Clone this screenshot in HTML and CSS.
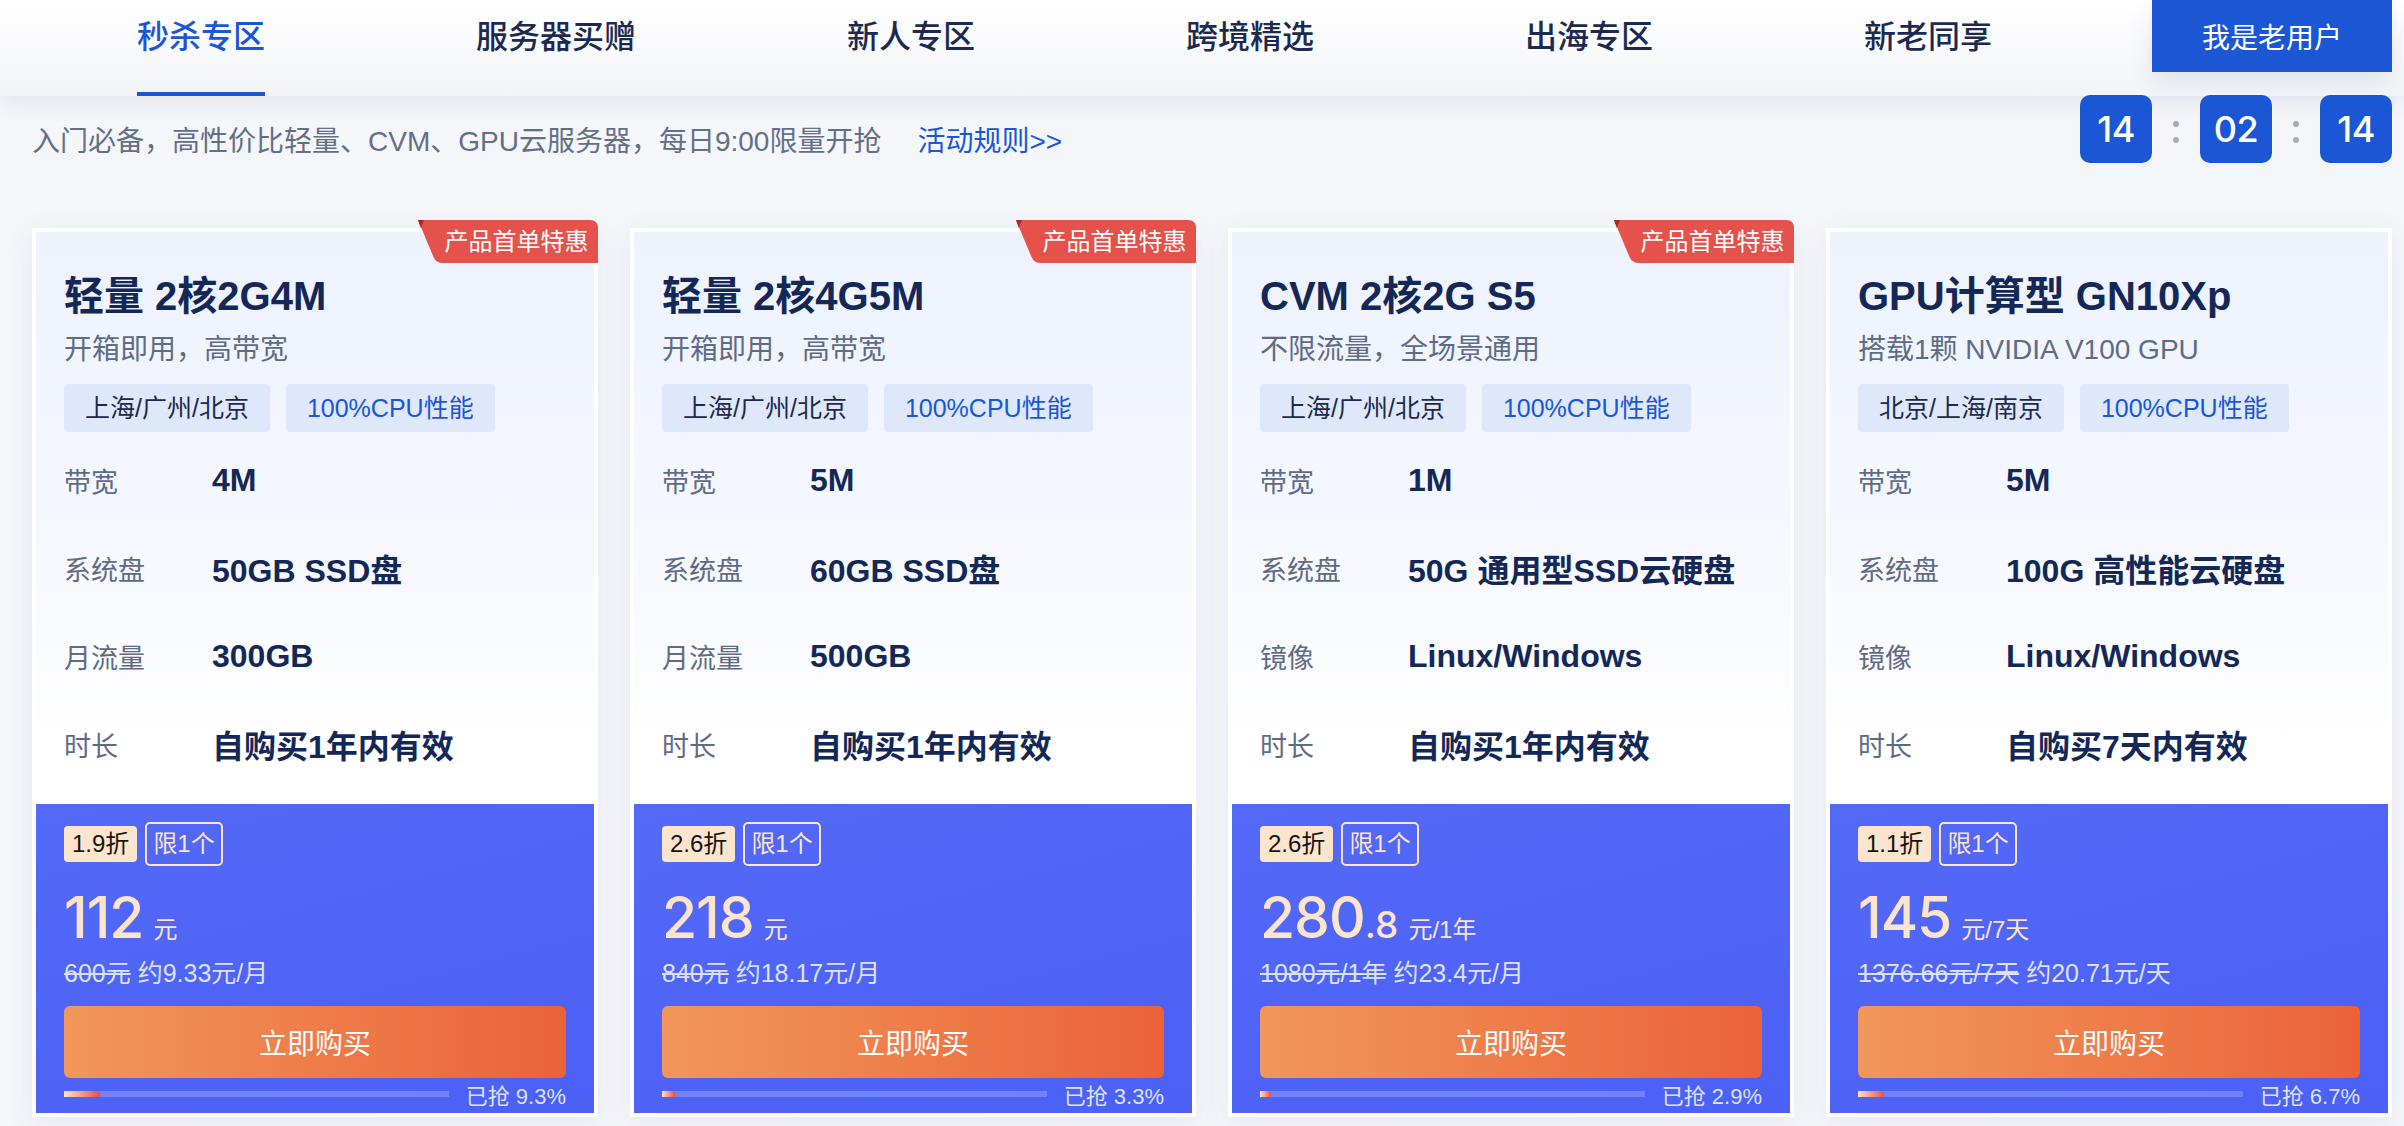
FILE: index.html
```html
<!DOCTYPE html>
<html lang="zh-CN">
<head>
<meta charset="utf-8">
<title>秒杀专区</title>
<link rel="stylesheet" href="styles.css">
</head>
<body>
<header class="nav">
  <div class="nav-inner">
    <nav class="tabs">
      <a class="tab active">秒杀专区</a>
      <a class="tab">服务器买赠</a>
      <a class="tab">新人专区</a>
      <a class="tab">跨境精选</a>
      <a class="tab">出海专区</a>
      <a class="tab">新老同享</a>
    </nav>
    <a class="old-user">我是老用户</a>
  </div>
</header>

<main class="main">
  <div class="topline">
    <p class="intro">入门必备，高性价比轻量、CVM、GPU云服务器，每日9:00限量开抢<a class="rules">活动规则&gt;&gt;</a></p>
    <div class="countdown">
      <span class="cd-box">14</span>
      <span class="cd-sep"><i></i><i></i></span>
      <span class="cd-box">02</span>
      <span class="cd-sep"><i></i><i></i></span>
      <span class="cd-box">14</span>
    </div>
  </div>

  <section class="cards">
    <article class="card">
      <div class="badge"><svg class="badge-bg" width="180" height="43" viewBox="0 0 180 43"><path d="M0 0H172Q180 0 180 8V43H25Q18 43 15.5 37Z" fill="#e4524b"/><path d="M0 0H6L2.8 8Z" fill="#a82a25"/></svg><span>产品首单特惠</span></div>
      <div class="card-top">
        <h3 class="title">轻量 2核2G4M</h3>
        <p class="desc">开箱即用，高带宽</p>
        <div class="tags"><span class="tag">上海/广州/北京</span><span class="tag tag-blue">100%CPU性能</span></div>
        <dl class="specs">
          <div class="row"><dt>带宽</dt><dd>4M</dd></div>
          <div class="row"><dt>系统盘</dt><dd>50GB SSD盘</dd></div>
          <div class="row"><dt>月流量</dt><dd>300GB</dd></div>
          <div class="row"><dt>时长</dt><dd>自购买1年内有效</dd></div>
        </dl>
      </div>
      <div class="card-bottom">
        <div class="deal"><span class="off">1.9折</span><span class="limit">限1个</span></div>
        <div class="price"><span class="num">112</span><span class="unit">元</span></div>
        <p class="orig"><s>600元</s> 约9.33元/月</p>
        <a class="buy">立即购买</a>
        <div class="progress"><div class="track"><div class="fill" style="width:9.3%"></div></div><span class="sold">已抢 9.3%</span></div>
      </div>
    </article>

    <article class="card">
      <div class="badge"><svg class="badge-bg" width="180" height="43" viewBox="0 0 180 43"><path d="M0 0H172Q180 0 180 8V43H25Q18 43 15.5 37Z" fill="#e4524b"/><path d="M0 0H6L2.8 8Z" fill="#a82a25"/></svg><span>产品首单特惠</span></div>
      <div class="card-top">
        <h3 class="title">轻量 2核4G5M</h3>
        <p class="desc">开箱即用，高带宽</p>
        <div class="tags"><span class="tag">上海/广州/北京</span><span class="tag tag-blue">100%CPU性能</span></div>
        <dl class="specs">
          <div class="row"><dt>带宽</dt><dd>5M</dd></div>
          <div class="row"><dt>系统盘</dt><dd>60GB SSD盘</dd></div>
          <div class="row"><dt>月流量</dt><dd>500GB</dd></div>
          <div class="row"><dt>时长</dt><dd>自购买1年内有效</dd></div>
        </dl>
      </div>
      <div class="card-bottom">
        <div class="deal"><span class="off">2.6折</span><span class="limit">限1个</span></div>
        <div class="price"><span class="num">218</span><span class="unit">元</span></div>
        <p class="orig"><s>840元</s> 约18.17元/月</p>
        <a class="buy">立即购买</a>
        <div class="progress"><div class="track"><div class="fill" style="width:3.3%"></div></div><span class="sold">已抢 3.3%</span></div>
      </div>
    </article>

    <article class="card">
      <div class="badge"><svg class="badge-bg" width="180" height="43" viewBox="0 0 180 43"><path d="M0 0H172Q180 0 180 8V43H25Q18 43 15.5 37Z" fill="#e4524b"/><path d="M0 0H6L2.8 8Z" fill="#a82a25"/></svg><span>产品首单特惠</span></div>
      <div class="card-top">
        <h3 class="title">CVM 2核2G S5</h3>
        <p class="desc">不限流量，全场景通用</p>
        <div class="tags"><span class="tag">上海/广州/北京</span><span class="tag tag-blue">100%CPU性能</span></div>
        <dl class="specs">
          <div class="row"><dt>带宽</dt><dd>1M</dd></div>
          <div class="row"><dt>系统盘</dt><dd>50G 通用型SSD云硬盘</dd></div>
          <div class="row"><dt>镜像</dt><dd>Linux/Windows</dd></div>
          <div class="row"><dt>时长</dt><dd>自购买1年内有效</dd></div>
        </dl>
      </div>
      <div class="card-bottom">
        <div class="deal"><span class="off">2.6折</span><span class="limit">限1个</span></div>
        <div class="price"><span class="num">280</span><span class="dec">.8</span><span class="unit">元/1年</span></div>
        <p class="orig"><s>1080元/1年</s> 约23.4元/月</p>
        <a class="buy">立即购买</a>
        <div class="progress"><div class="track"><div class="fill" style="width:2.9%"></div></div><span class="sold">已抢 2.9%</span></div>
      </div>
    </article>

    <article class="card">
      <div class="card-top">
        <h3 class="title">GPU计算型 GN10Xp</h3>
        <p class="desc">搭载1颗 NVIDIA V100 GPU</p>
        <div class="tags"><span class="tag">北京/上海/南京</span><span class="tag tag-blue">100%CPU性能</span></div>
        <dl class="specs">
          <div class="row"><dt>带宽</dt><dd>5M</dd></div>
          <div class="row"><dt>系统盘</dt><dd>100G 高性能云硬盘</dd></div>
          <div class="row"><dt>镜像</dt><dd>Linux/Windows</dd></div>
          <div class="row"><dt>时长</dt><dd>自购买7天内有效</dd></div>
        </dl>
      </div>
      <div class="card-bottom">
        <div class="deal"><span class="off">1.1折</span><span class="limit">限1个</span></div>
        <div class="price"><span class="num">145</span><span class="unit">元/7天</span></div>
        <p class="orig"><s>1376.66元/7天</s> 约20.71元/天</p>
        <a class="buy">立即购买</a>
        <div class="progress"><div class="track"><div class="fill" style="width:6.7%"></div></div><span class="sold">已抢 6.7%</span></div>
      </div>
    </article>
  </section>
</main>
</body>
</html>
```

FILE: styles.css
```css
* { box-sizing: border-box; }

html, body {
  margin: 0;
  padding: 0;
}

body {
  background: #f5f6fa;
  font-family: "Liberation Sans", "Noto Sans CJK SC", sans-serif;
  color: #172a55;
  width: 2404px;
  height: 1126px;
  overflow: hidden;
}

p, h3, dl, dd { margin: 0; }

/* ---------- nav ---------- */
.nav {
  position: relative;
  z-index: 2;
  height: 96px;
  background: linear-gradient(180deg, #ffffff 0%, #f3f4f8 100%);
  box-shadow: 0 6px 22px rgba(60, 80, 140, 0.10);
}

.nav-inner {
  width: 2360px;
  margin-left: 32px;
  height: 96px;
  display: flex;
  align-items: flex-start;
}

.tabs {
  display: flex;
  gap: 211px;
  padding-left: 105px;
}

.tab {
  display: block;
  height: 96px;
  padding-top: 15px;
  font-size: 32px;
  line-height: 44px;
  font-weight: 500;
  color: #1b2a4e;
  border-bottom: 4px solid transparent;
  cursor: pointer;
}

.tab.active {
  color: #1a56d6;
  border-bottom-color: #1a56d6;
}

.old-user {
  margin-left: auto;
  width: 240px;
  height: 72px;
  background: #1b57d4;
  color: #fff;
  font-size: 28px;
  display: flex;
  align-items: center;
  justify-content: center;
  box-shadow: 0 10px 22px rgba(70, 90, 140, 0.12);
}

/* ---------- main ---------- */
.main {
  width: 2360px;
  margin-left: 32px;
}

.topline {
  display: flex;
  justify-content: space-between;
  align-items: flex-start;
  height: 68px;
}

.intro {
  margin-top: 28px;
  font-size: 28px;
  line-height: 36px;
  color: #636e87;
}

.rules {
  margin-left: 36px;
  color: #1a56d6;
}

.countdown {
  position: relative;
  z-index: 3;
  margin-top: -1px;
  display: flex;
  align-items: center;
}

.cd-box {
  width: 72px;
  height: 68px;
  border-radius: 10px;
  background: #1b57d4;
  color: #fff;
  font-family: Inter, "Liberation Sans", sans-serif;
  font-size: 36px;
  font-weight: 500;
  display: flex;
  align-items: center;
  justify-content: center;
  letter-spacing: -0.5px;
}

.cd-sep {
  width: 48px;
  display: flex;
  flex-direction: column;
  align-items: center;
  gap: 10px;
  padding-top: 6px;
}

.cd-sep i {
  display: block;
  width: 6px;
  height: 6px;
  border-radius: 50%;
  background: #a1a9ba;
}

/* ---------- cards ---------- */
.cards {
  margin-top: 64px;
  display: grid;
  grid-template-columns: repeat(4, 566px);
  gap: 32px;
}

.card {
  position: relative;
  border: 4px solid #fff;
  background: #fff;
  box-shadow: 0 6px 28px rgba(60, 80, 140, 0.08);
}

.badge {
  position: absolute;
  top: -12px;
  right: -4px;
  width: 180px;
  height: 43px;
  padding-left: 25px;
  color: #fff;
  font-size: 24px;
  line-height: 43px;
  white-space: nowrap;
  display: flex;
  align-items: center;
  justify-content: center;
}

.badge-bg {
  position: absolute;
  left: 0;
  top: 0;
  display: block;
}

.badge span {
  position: relative;
  margin-right: 8px;
}

.card-top {
  padding: 40px 28px 16px;
  background: linear-gradient(180deg, #edf2fd 0%, #f6f8fe 55%, #ffffff 90%);
}

.title {
  font-size: 40px;
  line-height: 48px;
  font-weight: 700;
  color: #142857;
  white-space: nowrap;
}

.desc {
  margin-top: 12px;
  font-size: 28px;
  line-height: 36px;
  color: #5f6b85;
}

.tags {
  margin-top: 16px;
  display: flex;
  gap: 16px;
}

.tag {
  height: 48px;
  padding: 0 21px;
  border-radius: 4px;
  background: #dfe8fb;
  color: #1c2a4a;
  font-size: 25px;
  line-height: 48px;
}

.tag-blue {
  color: #1a56d6;
}

.specs {
  margin-top: 4px;
}

.row {
  height: 88px;
  display: grid;
  grid-template-columns: 148px 1fr;
  align-items: center;
}

.row dt {
  font-size: 27px;
  color: #5f6b85;
}

.row dd {
  font-size: 32px;
  font-weight: 700;
  color: #142857;
  white-space: nowrap;
}

/* ---------- bottom ---------- */
.card-bottom {
  height: 309px;
  padding: 18px 28px 7px;
  background: linear-gradient(165deg, #5369f7 0%, #4b60f5 100%);
  color: #fde4cc;
}

.deal {
  height: 44px;
  display: flex;
  align-items: center;
  gap: 8px;
}

.off {
  height: 36px;
  padding: 0 8px;
  border-radius: 4px;
  background: #fde4cc;
  color: #141414;
  font-size: 24px;
  line-height: 36px;
}

.limit {
  height: 44px;
  padding: 0 6px;
  border: 2px solid #fde4cc;
  border-radius: 5px;
  color: #fde4cc;
  font-size: 24px;
  line-height: 40px;
}

.price {
  margin-top: 23px;
  height: 58px;
  font-family: Inter, "Liberation Sans", "Noto Sans CJK SC", sans-serif;
  font-size: 57px;
  line-height: 58px;
  font-weight: 500;
  color: #fde4cc;
  white-space: nowrap;
  letter-spacing: -1px;
}

.price .dec {
  font-size: 37px;
  line-height: 1;
  letter-spacing: 0;
}

.price .unit {
  margin-left: 10px;
  font-family: "Liberation Sans", "Noto Sans CJK SC", sans-serif;
  font-size: 24px;
  line-height: 1;
  font-weight: 400;
  letter-spacing: 0;
}

.orig {
  margin-top: 9px;
  font-size: 25px;
  line-height: 34px;
  color: #dce1ff;
  white-space: nowrap;
}

.orig s {
  text-decoration-thickness: 2px;
}

.buy {
  margin-top: 16px;
  height: 72px;
  border-radius: 6px;
  background: linear-gradient(90deg, #f1975b 0%, #ee7a48 55%, #eb6238 100%);
  color: #fff;
  font-size: 28px;
  display: flex;
  align-items: center;
  justify-content: center;
}

.progress {
  margin-top: 4px;
  height: 24px;
  display: flex;
  align-items: center;
  gap: 17px;
}

.track {
  flex: 1;
  height: 6px;
  background: #7083f8;
}

.fill {
  height: 6px;
  background: linear-gradient(90deg, #fde4c4 0%, #e4524b 100%);
}

.sold {
  font-size: 22px;
  color: #dde2ff;
  white-space: nowrap;
}
```
